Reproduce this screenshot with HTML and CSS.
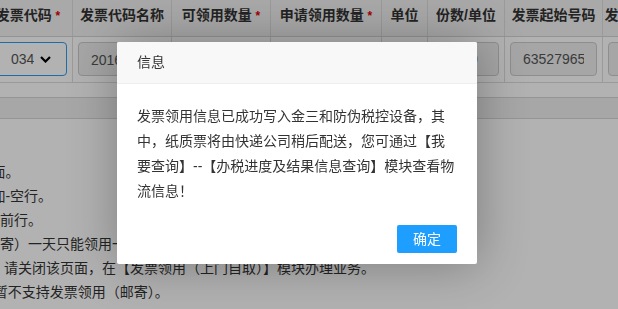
FILE: index.html
```html
<!DOCTYPE html>
<html lang="zh-CN">
<head>
    <meta charset="UTF-8">
    <meta name="viewport" content="width=device-width, initial-scale=1.0">
    <title>发票领用</title>
    <link rel="stylesheet" href="styles.css">
</head>
<body>
    <div class="page">
        <div class="grid">
            <div class="grid-row grid-head">
                <div class="cell c1">发票代码 <span class="req">*</span></div>
                <div class="cell c2">发票代码名称</div>
                <div class="cell c3">可领用数量 <span class="req">*</span></div>
                <div class="cell c4">申请领用数量 <span class="req">*</span></div>
                <div class="cell c5">单位</div>
                <div class="cell c6">份数/单位</div>
                <div class="cell c7">发票起始号码</div>
                <div class="cell c8">发票终止号码</div>
            </div>
            <div class="grid-row grid-body">
                <div class="cell c1">
                    <div class="select">
                        <span class="select-value">034001700111</span>
                        <svg width="11" height="7" viewBox="0 0 11 7"><path d="M1 1 L5.5 5.5 L10 1" fill="none" stroke="#000" stroke-width="2.2"/></svg>
                    </div>
                </div>
                <div class="cell c2"><input class="field" value="2016版增值税普通发票（卷式）" readonly></div>
                <div class="cell c3"><input class="field" value="20" readonly></div>
                <div class="cell c4"><input class="field" value="1"></div>
                <div class="cell c5 unit">卷</div>
                <div class="cell c6"><input class="field" value="200" readonly></div>
                <div class="cell c7"><input class="field" value="63527965" readonly></div>
                <div class="cell c8"><input class="field" value="63528164" readonly></div>
            </div>
        </div>
        <div class="grid-scroll"></div>
        <div class="section-bar"></div>
        <div class="notes">
            <p>温馨提示：</p>
            <p>请使用0.5版本以上浏览器，建议使用谷歌浏览器访问页面。</p>
            <p>模板行距为2.5倍，请勿在数据的末尾或中间处随意地增加-空行。</p>
            <p>发票种类选择后数量自动带出，如需修改请先选中删除当前行。</p>
            <p>同一个纳税人每次通过网上申领的方式办理发票领用（邮寄）一天只能领用一次。</p>
            <p>若您需要变更领票人/收件人的邮寄地址或其他相关信息，请关闭该页面，在【发票领用（上门自取）】模块办理业务。</p>
            <p>目前仅限本省内地址，港澳台及部分偏远地区等3类地区暂不支持发票领用（邮寄）。</p>
        </div>
    </div>

    <div class="shade"></div>
    <div class="layer">
        <div class="layer-title">信息</div>
        <div class="layer-content">发票领用信息已成功写入金三和防伪税控设备，其中，纸质票将由快递公司稍后配送，您可通过【我要查询】--【办税进度及结果信息查询】模块查看物流信息！</div>
        <div class="layer-btn"><a href="#">确定</a></div>
    </div>
</body>
</html>
```

FILE: styles.css
```css
body { margin: 0; overflow: hidden; background-color: #fff; color: #333; font-family: "Liberation Sans", "Noto Sans CJK SC", sans-serif; font-size: 14px; text-autospace: no-autospace; }
.page { margin-left: -16px; width: 1000px; }

/* invoice grid */
.grid-row { display: flex; }
.cell { flex: none; box-sizing: border-box; border-right: 1px solid #ddd; }
.c1 { width: 89px; }
.c2 { width: 99px; }
.c3 { width: 99px; }
.c4 { width: 111px; }
.c5 { width: 46px; }
.c6 { width: 77px; }
.c7 { width: 98px; }
.c8 { width: 88px; }
.grid-head { height: 37px; box-sizing: border-box; background-color: #f2f2f2; border-bottom: 1px solid #d4d4d4; }
.grid-head .cell { text-align: center; font-weight: bold; line-height: 30px; padding-bottom: 6px; white-space: nowrap; }
.req { color: #e60000; font-size: 12px; }
.grid-body { height: 46px; box-sizing: border-box; border-bottom: 1px solid #ddd; }
.grid-body .cell { padding: 5px 5px 0; }
.unit { text-align: center; line-height: 34px; color: #555; }

.field { box-sizing: border-box; width: 100%; height: 34px; padding: 0 12px; border: 1px solid #ccc; border-radius: 4px; background-color: #eee; color: #555; font: 14px "Liberation Sans", "Noto Sans CJK SC", sans-serif; text-align: center; outline: none; }
.select { box-sizing: border-box; height: 34px; display: flex; align-items: center; padding: 0 14px 0 21px; border: 1px solid #2a9cf0; border-radius: 4px; background-color: #fff; color: #555; }
.select-value { width: 23px; overflow: hidden; white-space: nowrap; }
.select svg { margin-left: 6px; flex: none; }

.grid-scroll { height: 14px; }
.section-bar { height: 22px; box-sizing: border-box; background-color: #efefef; border-top: 1px solid #d6d6d6; border-bottom: 1px solid #d6d6d6; }

.notes { margin-left: -334px; padding-top: 17px; line-height: 24px; white-space: nowrap; }
.notes p { margin: 0; }

/* dialog */
.shade { position: fixed; top: 0; left: 0; right: 0; bottom: 0; background-color: rgba(0,0,0,0.3); }
.layer { position: absolute; left: 117px; top: 42px; width: 360px; background-color: #fff; border-radius: 2px; box-shadow: 1px 1px 50px rgba(0,0,0,0.3); }
.layer-title { height: 42px; box-sizing: border-box; padding: 0 20px; line-height: 41px; background-color: #f8f8f8; border-bottom: 1px solid #eee; border-radius: 2px 2px 0 0; color: #333; }
.layer-content { padding: 20px; line-height: 25px; color: #333; }
.layer-btn { display: flex; justify-content: flex-end; padding: 1px 20px 11px; }
.layer-btn a { height: 28px; line-height: 28px; padding: 0 16px; background-color: #1e9fff; color: #fff; border-radius: 2px; text-decoration: none; }
```
